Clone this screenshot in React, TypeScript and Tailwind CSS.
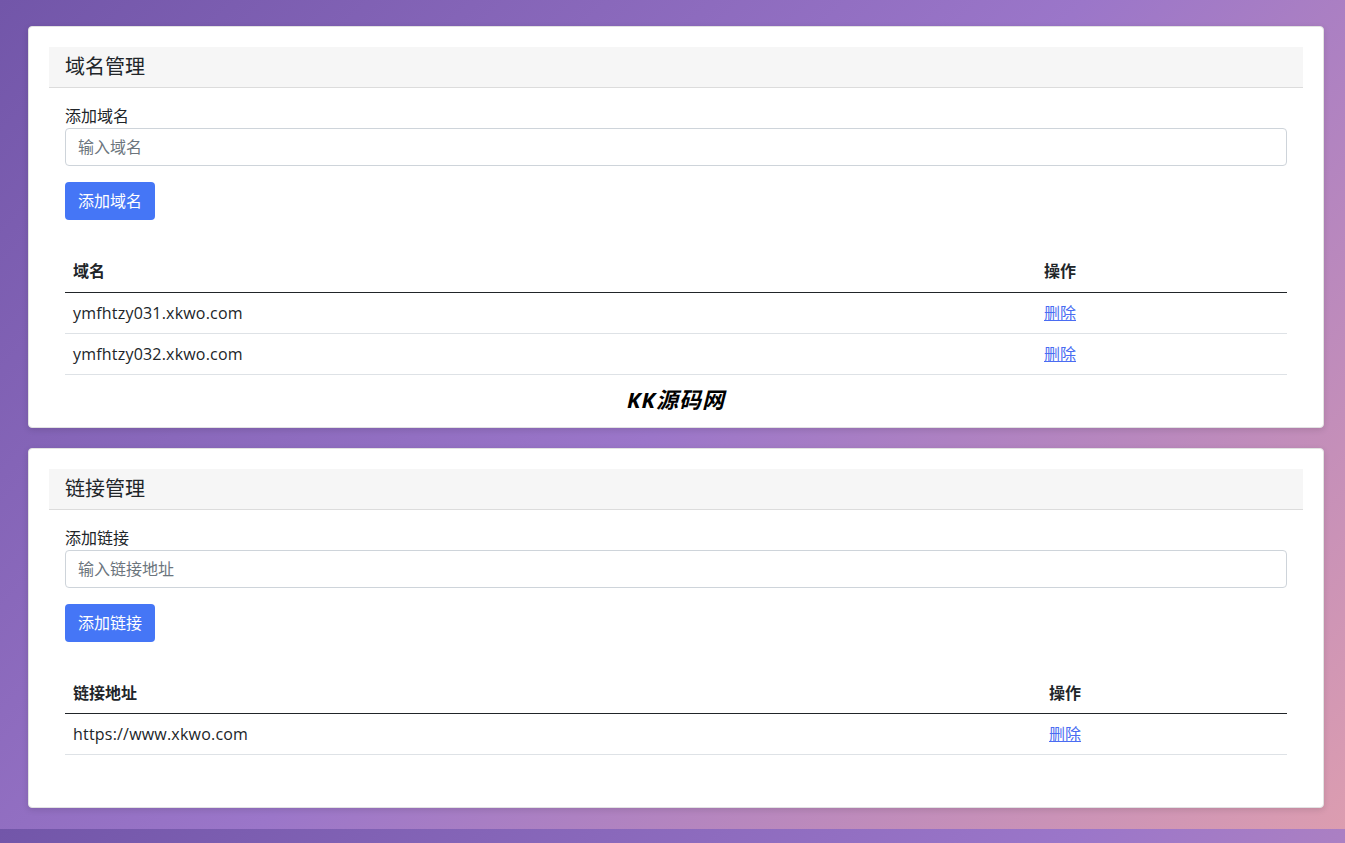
import React from "react"

const font = {
  fontFamily: '"Open Sans", "Noto Sans CJK SC", sans-serif',
}

type Section = {
  title: string
  label: string
  placeholder: string
  button: string
  column: string
  firstCol: string
  rows: string[]
  footer?: boolean
}

const sections: Section[] = [
  {
    title: "域名管理",
    label: "添加域名",
    placeholder: "输入域名",
    button: "添加域名",
    column: "域名",
    firstCol: "w-[971px]",
    rows: ["ymfhtzy031.xkwo.com", "ymfhtzy032.xkwo.com"],
    footer: true,
  },
  {
    title: "链接管理",
    label: "添加链接",
    placeholder: "输入链接地址",
    button: "添加链接",
    column: "链接地址",
    firstCol: "w-[976px]",
    rows: ["https://www.xkwo.com"],
  },
]

function Card({ s }: { s: Section }) {
  return (
    <div className="bg-white border border-[#e2e2e2] rounded-[4px] shadow-[0_2px_6px_rgba(0,0,0,0.12)] px-[20px] pt-[20px]">
      {/* card header */}
      <div className="h-[41px] bg-[#f6f6f6] border-b border-[#dcdcdc] px-4 flex items-center text-[20px] text-[#212529]">
        {s.title}
      </div>

      <div className="px-4 pt-[16px]">
        <label className="block text-[16px] leading-[24px] text-[#212529]">{s.label}</label>
        <input
          className="block w-full h-[38px] border border-[#ced4da] rounded-[4px] px-3 text-[16px] text-[#495057] placeholder:text-[#6c757d] outline-none"
          placeholder={s.placeholder}
        />
        <button className="mt-4 h-[38px] px-[13px] rounded-[4px] bg-[#4576f6] text-white text-[16px]">
          {s.button}
        </button>

        <table className="w-full mt-[31px] text-[16px] text-[#212529] border-collapse">
          <thead>
            <tr className="h-[41px] border-b border-[#212529]">
              <th className={`${s.firstCol} text-left font-bold px-2`}>{s.column}</th>
              <th className="text-left font-bold px-2">操作</th>
            </tr>
          </thead>
          <tbody>
            {s.rows.map((r) => (
              <tr key={r} className="h-[41px] border-b border-[#dee2e6]">
                <td className="px-2 tracking-[0.2px]">{r}</td>
                <td className="px-2">
                  <a href="#" className="text-[#4a6cf2] underline">
                    删除
                  </a>
                </td>
              </tr>
            ))}
          </tbody>
        </table>
      </div>

      {s.footer ? (
        <div className="h-[52px] flex items-center justify-center pb-[2px]">
          <span className="text-[22px] font-bold italic tracking-[1px] text-black">KK源码网</span>
        </div>
      ) : (
        <div className="h-[52px]" />
      )}
    </div>
  )
}

export default function App() {
  return (
    <div
      className="min-h-[843px] bg-[linear-gradient(135deg,#7256a9_0%,#9b76c9_50%,#dc9db0_100%)] bg-[length:100%_829px] bg-repeat-y"
      style={font}
    >
      <div className="pl-[28px] pr-[21px] pt-[26px] flex flex-col gap-[20px]">
        {sections.map((s) => (
          <Card key={s.title} s={s} />
        ))}
      </div>
    </div>
  )
}
